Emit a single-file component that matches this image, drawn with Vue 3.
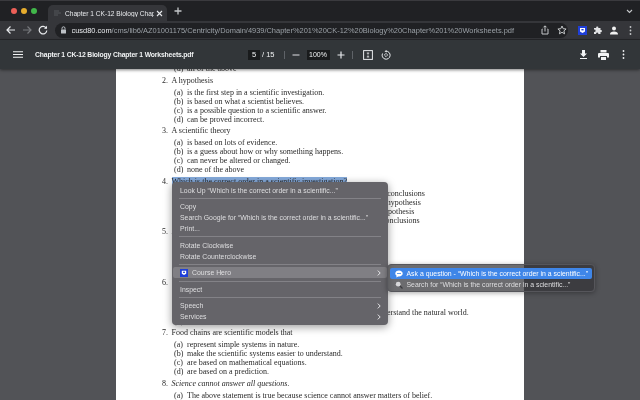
<script setup>
const questions = [
  { num: "", title: "", options: [{ tag: "(d)", text: "all of the above" }] },
  {
    num: "2.",
    title: "A hypothesis",
    options: [
      { tag: "(a)", text: "is the first step in a scientific investigation." },
      { tag: "(b)", text: "is based on what a scientist believes." },
      { tag: "(c)", text: "is a possible question to a scientific answer." },
      { tag: "(d)", text: "can be proved incorrect." },
    ],
  },
  {
    num: "3.",
    title: "A scientific theory",
    options: [
      { tag: "(a)", text: "is based on lots of evidence." },
      { tag: "(b)", text: "is a guess about how or why something happens." },
      { tag: "(c)", text: "can never be altered or changed." },
      { tag: "(d)", text: "none of the above" },
    ],
  },
  {
    num: "4.",
    title: "Which is the correct order in a scientific investigation?",
    selected: true,
    options: [
      { tag: "(a)", text: "question, observations, hypothesis, experiment, analyze, draw conclusions" },
      { tag: "(b)", text: "make observations, question, conclusions, experiment, form a hypothesis" },
      { tag: "(c)", text: "ask question, conclusions, experiment, observations, form a hypothesis" },
      { tag: "(d)", text: "form a hypothesis, observations, question, experiment, draw conclusions" },
    ],
  },
  {
    num: "5.",
    title: "A scientific model",
    options: [
      { tag: "(a)", text: "is a simple idea." },
      { tag: "(b)", text: "is a representation." },
      { tag: "(c)", text: "is never changed." },
      { tag: "(d)", text: "is always true." },
    ],
  },
  {
    num: "6.",
    title: "Scientific models",
    options: [
      { tag: "(a)", text: "are always correct." },
      { tag: "(b)", text: "are very complex." },
      { tag: "(c)", text: "Scientific models are often used by scientists to help them understand the natural world." },
      { tag: "(d)", text: "are never useful." },
    ],
  },
  {
    num: "7.",
    title: "Food chains are scientific models that",
    options: [
      { tag: "(a)", text: "represent simple systems in nature." },
      { tag: "(b)", text: "make the scientific systems easier to understand." },
      { tag: "(c)", text: "are based on mathematical equations." },
      { tag: "(d)", text: "are based on a prediction." },
    ],
  },
  {
    num: "8.",
    title: "Science cannot answer all questions.",
    italic: true,
    options: [{ tag: "(a)", text: "The above statement is true because science cannot answer matters of belief." }],
  },
];
</script>

<template>
  <div class="browser">
    <div class="tabstrip">
      <div class="lights">
        <span class="light red"></span>
        <span class="light yellow"></span>
        <span class="light green"></span>
      </div>
      <div class="tab">
        <svg class="favicon" width="10" height="8" viewBox="0 0 10 8"><path d="M1 2h5M1 4h7M1 6h4" stroke="#55565a" stroke-width="1" fill="none" /></svg>
        <span class="tab-title">Chapter 1 CK-12 Biology Chapt</span>
        <svg width="7" height="7" viewBox="0 0 7 7"><path d="M1 1l5 5M6 1l-5 5" stroke="#e8eaed" stroke-width="1.1" /></svg>
      </div>
      <svg class="newtab" width="8" height="8" viewBox="0 0 8 8"><path d="M4 .5v7M.5 4h7" stroke="#c4c7c9" stroke-width="1.3" /></svg>
      <svg class="chevron" width="7" height="5" viewBox="0 0 7 5"><path d="M1 1l2.500 2.500L6 1" stroke="#c4c7c9" stroke-width="1.1" fill="none" /></svg>
    </div>

    <div class="toolbar">
      <svg width="10" height="10" viewBox="0 0 10 10"><path d="M9 5H1.500M4.500 1.500L1 5l3.500 3.500" stroke="#e8eaed" stroke-width="1.2" fill="none" /></svg>
      <svg width="10" height="10" viewBox="0 0 10 10"><path d="M1 5h7.500M5.500 1.500L9 5 5.500 8.500" stroke="#77797d" stroke-width="1.2" fill="none" /></svg>
      <svg width="10" height="10" viewBox="0 0 10 10"><path d="M8.300 3.200A3.800 3.800 0 1 0 8.800 5.500" stroke="#e8eaed" stroke-width="1.200" fill="none" /><path d="M9 .8v3H6z" fill="#e8eaed" /></svg>
      <div class="omnibox">
        <svg width="7" height="8" viewBox="0 0 7 8"><rect x="1" y="3.500" width="5" height="4" rx=".6" fill="#bdc1c6" /><path d="M2 3.500V2.300a1.500 1.500 0 0 1 3 0v1.200" stroke="#bdc1c6" fill="none" /></svg>
        <span class="url"><b>cusd80.com</b>/cms/lib6/AZ01001175/Centricity/Domain/4939/Chapter%201%20CK-12%20Biology%20Chapter%201%20Worksheets.pdf</span>
        <svg class="omni-icon" width="8" height="10" viewBox="0 0 8 10"><path d="M1.500 4H1v5h6V4h-.5M4 6.500V1M2.500 2.300L4 .8l1.500 1.500" stroke="#c4c7c9" fill="none" /></svg>
        <svg width="10" height="10" viewBox="0 0 10 10"><path d="M5 1l1.200 2.700 2.900.3-2.200 1.900.7 2.900L5 7.300 2.400 8.800l.7-2.900L.9 4l2.900-.3z" stroke="#c4c7c9" fill="none" /></svg>
      </div>
      <svg width="9" height="9" viewBox="0 0 9 9"><rect width="9" height="9" fill="#1f3fd8" /><path d="M2 2h5v3.500L4.500 7 2 5.500z" fill="#fff" /><rect x="3.400" y="3" width="2.200" height="1.400" fill="#1f3fd8" /></svg>
      <svg width="10" height="10" viewBox="0 0 10 10"><path d="M1 3h2.200a1.100 1.100 0 1 1 2.100 0h2.200v2a1.100 1.100 0 1 1 0 2.100V9H5.200a1.100 1.100 0 1 0-2 0H1V6.800a1.100 1.100 0 1 0 0-2z" fill="#e3e4e6" /></svg>
      <svg width="10" height="9" viewBox="0 0 10 9"><circle cx="5" cy="2.500" r="2" fill="#f1f1f1" /><path d="M1 8.500c0-2.200 1.500-3 4-3s4 .8 4 3z" fill="#f1f1f1" /></svg>
      <svg class="toolbar-dots" width="3" height="9" viewBox="0 0 3 9"><circle cx="1.500" cy="1" r=".9" fill="#c4c7c9" /><circle cx="1.500" cy="4.500" r=".9" fill="#c4c7c9" /><circle cx="1.500" cy="8" r=".9" fill="#c4c7c9" /></svg>
    </div>

    <div class="pdfbar">
      <div class="pdf-left">
        <svg width="10" height="7" viewBox="0 0 10 7"><path d="M0 .7h10M0 3.500h10M0 6.300h10" stroke="#f1f3f4" stroke-width="1.100" /></svg>
        <span class="pdf-name">Chapter 1 CK-12 Biology Chapter 1 Worksheets.pdf</span>
      </div>
      <div class="pdf-mid">
        <span class="num-box">5</span>
        <span class="pages">/ 15</span>
        <span class="divider"></span>
        <svg width="8" height="8" viewBox="0 0 8 8"><path d="M.5 4h7" stroke="#c4c7c9" stroke-width="1.200" /></svg>
        <span class="zoom-box">100%</span>
        <svg width="8" height="8" viewBox="0 0 8 8"><path d="M4 .5v7M.5 4h7" stroke="#e8eaed" stroke-width="1.200" /></svg>
        <span class="divider"></span>
        <svg class="fit" width="10" height="10" viewBox="0 0 10 10"><rect x=".6" y=".6" width="8.800" height="8.800" stroke="#e8eaed" stroke-width="1" fill="none" /><path d="M5 2v1.800M5 6.200V8M3.800 3.300L5 4.200 6.200 3.300M3.800 6.700L5 5.800l1.200.9" stroke="#e8eaed" stroke-width=".8" fill="none" /></svg>
        <svg class="rot" width="10" height="10" viewBox="0 0 10 10"><path d="M5 1.200A4 4 0 1 1 1.500 3.500" stroke="#e8eaed" fill="none" /><path d="M5 3.300L6.700 5 5 6.700 3.300 5z" stroke="#e8eaed" stroke-width=".8" fill="none" /><path d="M5.500 0L3.500 1.200 5.500 2.500z" fill="#e8eaed" /></svg>
      </div>
      <div class="pdf-right">
        <svg width="9" height="9" viewBox="0 0 9 9"><path d="M3 0h3v3.500h2L4.500 7 1 3.500h2zM1 8h7v1H1z" fill="#f1f3f4" /></svg>
        <svg width="11" height="10" viewBox="0 0 11 10"><path d="M2.500 0h6v2.500h-6zM1 3h9a1 1 0 0 1 1 1v3.500H9V6H2v1.500H0V4a1 1 0 0 1 1-1zM3 7h5v3H3z" fill="#f1f3f4" /></svg>
        <svg class="pdf-dots" width="3" height="9" viewBox="0 0 3 9"><circle cx="1.500" cy="1" r=".9" fill="#f1f3f4" /><circle cx="1.500" cy="4.500" r=".9" fill="#f1f3f4" /><circle cx="1.500" cy="8" r=".9" fill="#f1f3f4" /></svg>
      </div>
    </div>

    <div class="viewer">
      <div class="page">
        <div v-for="q in questions" :key="q.num" class="question">
          <div v-if="q.num" class="q-title">
            <span class="q-num">{{ q.num }}</span>
            <span :class="{ sel: q.selected, ital: q.italic }">{{ q.title }}</span>
          </div>
          <div class="options">
            <div v-for="o in q.options" :key="o.text" class="option">
              <span class="tag">{{ o.tag }}</span>
              <span>{{ o.text }}</span>
            </div>
          </div>
        </div>
      </div>

      <div class="menu">
        <div class="item">Look Up “Which is the correct order in a scientific...”</div>
        <div class="sep"></div>
        <div class="item">Copy</div>
        <div class="item">Search Google for “Which is the correct order in a scientific...”</div>
        <div class="item">Print...</div>
        <div class="sep"></div>
        <div class="item">Rotate Clockwise</div>
        <div class="item">Rotate Counterclockwise</div>
        <div class="sep"></div>
        <div class="item active">
          <svg class="ch-logo" width="8" height="8" viewBox="0 0 8 8"><rect width="8" height="8" fill="#1f3fd8" /><path d="M1.800 1.800h4.400v3L4 6 1.800 4.800z" fill="#fff" /><rect x="3" y="2.700" width="2" height="1.200" fill="#1f3fd8" /></svg>
          <span>Course Hero</span>
          <svg class="arrow" width="4" height="6" viewBox="0 0 4 6"><path d="M.8.600L3.200 3 .8 5.400" stroke="#e6e6e8" fill="none" /></svg>
        </div>
        <div class="sep"></div>
        <div class="item">Inspect</div>
        <div class="sep"></div>
        <div class="item">
          <span>Speech</span>
          <svg class="arrow" width="4" height="6" viewBox="0 0 4 6"><path d="M.8.600L3.200 3 .8 5.400" stroke="#e6e6e8" fill="none" /></svg>
        </div>
        <div class="item">
          <span>Services</span>
          <svg class="arrow" width="4" height="6" viewBox="0 0 4 6"><path d="M.8.600L3.200 3 .8 5.400" stroke="#e6e6e8" fill="none" /></svg>
        </div>

        <div class="submenu">
          <div class="sub-item sub-active">
            <svg width="8" height="8" viewBox="0 0 8 8"><path d="M4 .5C1.900.5.300 1.800.300 3.500c0 1 .5 1.800 1.300 2.300L1.300 7.500 3.200 6.400H4c2.100 0 3.700-1.300 3.700-2.900S6.100.5 4 .5z" fill="#fff" /><path d="M2 3.500h4" stroke="#3f86e8" stroke-width=".8" /></svg>
            <span>Ask a question - “Which is the correct order in a scientific...”</span>
          </div>
          <div class="sub-item">
            <svg width="8" height="8" viewBox="0 0 8 8"><circle cx="3.200" cy="3.200" r="2.400" fill="#d8d8da" /><path d="M5 5l2.500 2.500" stroke="#3a3a3e" stroke-width="1.300" /></svg>
            <span>Search for “Which is the correct order in a scientific...”</span>
          </div>
        </div>
      </div>
    </div>
  </div>
</template>

<style scoped>
.browser {
  width: 640px;
  height: 400px;
  display: flex;
  flex-direction: column;
  overflow: hidden;
  font-family: "Liberation Sans", Arial, sans-serif;
  background: #525357;
  filter: blur(0.35px);
}

.tabstrip {
  height: 21px;
  flex: none;
  display: flex;
  align-items: flex-end;
  background: #202124;
  padding-left: 11px;
  border-top: 1px solid #3a3a3e;
  box-sizing: border-box;
}
.lights {
  display: flex;
  gap: 4px;
  align-self: center;
  margin-right: 11px;
}
.light {
  width: 6px;
  height: 6px;
  border-radius: 50%;
}
.red { background: #ec5f57; }
.yellow { background: #e5ac2d; }
.green { background: #41b74a; }

.tab {
  width: 119px;
  height: 16px;
  background: #35363a;
  border-radius: 5px 5px 0 0;
  display: flex;
  align-items: center;
  gap: 2px;
  padding: 0 4.500px 0 5px;
  box-sizing: border-box;
  color: #e8eaed;
  font-size: 6.600px;
}
.tab-title {
  flex: 1;
  white-space: nowrap;
  overflow: hidden;
}
.newtab {
  align-self: center;
  margin-left: 7px;
}
.chevron {
  align-self: center;
  margin-left: auto;
  margin-right: 7.500px;
}

.toolbar {
  height: 18px;
  flex: none;
  display: flex;
  align-items: center;
  gap: 6px;
  padding-left: 6px;
  background: #35363a;
  border-bottom: 1px solid #27282b;
}
.omnibox {
  width: 513px;
  height: 15px;
  flex: none;
  margin: 0 3.500px 0 1px;
  box-sizing: border-box;
  background: #202124;
  border-radius: 8px;
  display: flex;
  align-items: center;
  gap: 4.500px;
  padding: 0 1px 0 5px;
}
.url {
  flex: 1;
  min-width: 0;
  color: #9aa0a6;
  font-size: 7.450px;
  white-space: nowrap;
  overflow: hidden;
}
.url b {
  color: #e8eaed;
  font-weight: normal;
}
.omni-icon {
  margin-right: 3.500px;
}
.toolbar-dots {
  margin-left: 4px;
}

.pdfbar {
  height: 29px;
  flex: none;
  display: flex;
  align-items: center;
  background: #323639;
  box-shadow: 0 1px 3px rgba(0, 0, 0, 0.5);
  position: relative;
  z-index: 1;
  padding: 0 15.500px 0 13px;
  color: #f1f3f4;
  font-size: 7.5px;
}
.pdf-left {
  display: flex;
  align-items: center;
  gap: 12px;
  width: 235px;
  flex: none;
}
.pdf-name {
  font-size: 6.800px;
  font-weight: bold;
  letter-spacing: -0.15px;
  white-space: nowrap;
}
.pdf-mid {
  display: flex;
  align-items: center;
  gap: 7px;
}
.num-box {
  background: #191b1c;
  width: 12px;
  height: 10px;
  line-height: 10px;
  text-align: center;
}
.pages {
  margin-left: -5px;
  margin-right: 2px;
}
.divider {
  width: 1px;
  height: 8px;
  background: #5f6368;
}
.zoom-box {
  background: #191b1c;
  width: 23px;
  height: 10px;
  line-height: 10px;
  text-align: center;
  font-size: 7px;
}
.fit {
  margin-left: 3px;
}
.rot {
  margin-left: 1px;
}
.pdf-right {
  display: flex;
  align-items: center;
  gap: 10px;
  margin-left: auto;
}
.pdf-dots {
  margin-left: 3px;
}

.viewer {
  flex: 1;
  min-height: 0;
  display: flex;
  justify-content: center;
  position: relative;
  overflow: hidden;
}
.page {
  width: 408px;
  background: #fff;
  padding: 0 0 0 46px;
  box-sizing: border-box;
  color: #2a2a2a;
  font-family: "Liberation Serif", "Times New Roman", serif;
  font-size: 8px;
  line-height: 9px;
  margin-top: -5px;
  overflow: hidden;
}
.question {
  margin-bottom: 2.500px;
}
.q-title {
  display: flex;
  margin-bottom: 3px;
  white-space: nowrap;
}
.q-num {
  width: 9.500px;
  flex: none;
}
.sel {
  background: #85aadb;
}
.ital {
  font-style: italic;
}
.options {
  padding-left: 12px;
}
.option {
  display: flex;
  white-space: nowrap;
}
.tag {
  width: 13px;
  flex: none;
}

.menu {
  position: absolute;
  left: 172px;
  top: 113px;
  width: 216px;
  height: 143px;
  box-sizing: border-box;
  padding: 2.500px 0;
  background: #656469;
  border-radius: 4px;
  box-shadow: 0 2px 8px rgba(0, 0, 0, 0.4);
  color: #dfdfe1;
  font-size: 6.900px;
}
.item {
  height: 11px;
  line-height: 11px;
  padding: 0 7px 0 8px;
  display: flex;
  align-items: center;
  white-space: nowrap;
}
.sep {
  height: 1px;
  background: #838287;
  margin: 2.300px 7px;
}
.active {
  margin: 0 1px;
  padding: 0 6px 0 7px;
  background: #807f84;
  border-radius: 2px;
}
.ch-logo {
  margin-right: 4px;
}
.arrow {
  margin-left: auto;
}
.submenu {
  position: absolute;
  left: 215px;
  top: 82px;
  width: 208px;
  height: 28px;
  box-sizing: border-box;
  padding: 3px 2px;
  background: rgba(51, 51, 56, 0.72);
  border: 1px solid #56565b;
  border-radius: 4px;
  box-shadow: 0 1px 5px rgba(0, 0, 0, 0.35);
  font-size: 6.900px;
}
.sub-item {
  height: 11px;
  display: flex;
  align-items: center;
  gap: 3.500px;
  padding-left: 5px;
  white-space: nowrap;
}
.sub-active {
  background: #3f86e8;
  border-radius: 2px;
  color: #fff;
}
</style>
